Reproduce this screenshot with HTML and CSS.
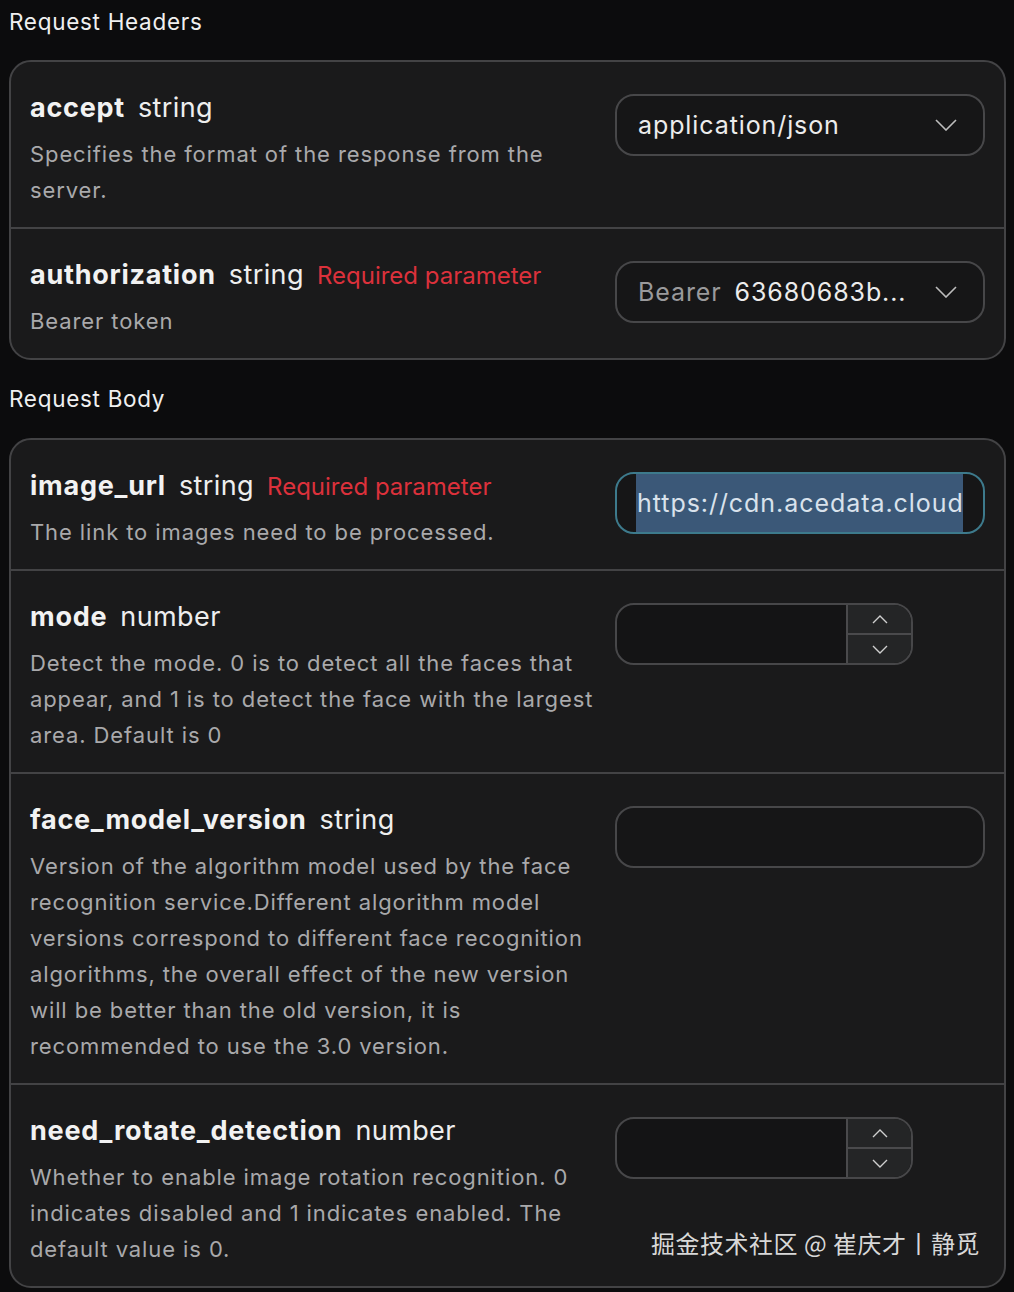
FILE: index.html
```html
<!DOCTYPE html>
<html>
<head>
<meta charset="utf-8">
<link rel="stylesheet" href="styles.css">
</head>
<body>
<div class="page">
  <h2 class="section-title">Request Headers</h2>
  <div class="card">
    <div class="row">
      <div class="info">
        <div class="title"><span class="name">accept</span><span class="type">string</span></div>
        <p class="desc">Specifies the format of the response from the server.</p>
      </div>
      <div class="control">
        <div class="field select">
          <span class="value">application/json</span>
          <svg class="chev" width="22" height="12" viewBox="0 0 22 12"><path d="M1 1 L11 11 L21 1" fill="none" stroke="#bdbdbd" stroke-width="1.6"/></svg>
        </div>
      </div>
    </div>
    <div class="row">
      <div class="info">
        <div class="title"><span class="name">authorization</span><span class="type">string</span><span class="req">Required parameter</span></div>
        <p class="desc">Bearer token</p>
      </div>
      <div class="control">
        <div class="field select">
          <span class="value"><span class="prefix">Bearer</span>63680683b...</span>
          <svg class="chev" width="22" height="12" viewBox="0 0 22 12"><path d="M1 1 L11 11 L21 1" fill="none" stroke="#bdbdbd" stroke-width="1.6"/></svg>
        </div>
      </div>
    </div>
  </div>

  <h2 class="section-title body-title">Request Body</h2>
  <div class="card body-card">
    <div class="row">
      <div class="info">
        <div class="title"><span class="name">image_url</span><span class="type">string</span><span class="req">Required parameter</span></div>
        <p class="desc">The link to images need to be processed.</p>
      </div>
      <div class="control">
        <div class="field focused"><span class="sel">https://cdn.acedata.cloud</span></div>
      </div>
    </div>
    <div class="row">
      <div class="info">
        <div class="title"><span class="name">mode</span><span class="type">number</span></div>
        <p class="desc">Detect the mode. 0 is to detect all the faces that appear, and 1 is to detect the face with the largest area. Default is 0</p>
      </div>
      <div class="control">
        <div class="number">
          <div class="num-input"></div>
          <div class="spin">
            <div class="spin-btn"><svg width="16" height="9" viewBox="0 0 16 9"><path d="M1 8 L8 1 L15 8" fill="none" stroke="#cfcfcf" stroke-width="1.4"/></svg></div>
            <div class="spin-btn"><svg width="16" height="9" viewBox="0 0 16 9"><path d="M1 1 L8 8 L15 1" fill="none" stroke="#cfcfcf" stroke-width="1.4"/></svg></div>
          </div>
        </div>
      </div>
    </div>
    <div class="row">
      <div class="info">
        <div class="title"><span class="name">face_model_version</span><span class="type">string</span></div>
        <p class="desc">Version of the algorithm model used by the face recognition service.Different algorithm model versions correspond to different face recognition algorithms, the overall effect of the new version will be better than the old version, it is recommended to use the 3.0 version.</p>
      </div>
      <div class="control">
        <div class="field"></div>
      </div>
    </div>
    <div class="row">
      <div class="info">
        <div class="title"><span class="name">need_rotate_detection</span><span class="type">number</span></div>
        <p class="desc">Whether to enable image rotation recognition. 0 indicates disabled and 1 indicates enabled. The default value is 0.</p>
      </div>
      <div class="control">
        <div class="number">
          <div class="num-input"></div>
          <div class="spin">
            <div class="spin-btn"><svg width="16" height="9" viewBox="0 0 16 9"><path d="M1 8 L8 1 L15 8" fill="none" stroke="#cfcfcf" stroke-width="1.4"/></svg></div>
            <div class="spin-btn"><svg width="16" height="9" viewBox="0 0 16 9"><path d="M1 1 L8 8 L15 1" fill="none" stroke="#cfcfcf" stroke-width="1.4"/></svg></div>
          </div>
        </div>
      </div>
    </div>
    <div class="watermark">掘金技术社区 @ 崔庆才丨静觅</div>
  </div>
</div>
</body>
</html>
```

FILE: styles.css
```css
html, body {
  margin: 0;
  padding: 0;
  background: #0c0c0d;
}
body {
  font-family: Inter, "Noto Sans", "Noto Sans CJK SC", sans-serif;
  color: #ececec;
}
.page {
  padding: 0 8px 0 9px;
}
.section-title {
  margin: 0;
  font-size: 22.5px;
  font-weight: 400;
  line-height: 44px;
  letter-spacing: 0.7px;
  color: #f0f0f0;
  height: 44px;
  margin-bottom: 16px;
}
.body-title {
  margin-top: 17px;
  margin-bottom: 17px;
}
.card {
  background: #1a1a1b;
  border: 2px solid #434345;
  border-radius: 22px;
  overflow: hidden;
  position: relative;
}
.row {
  display: flex;
  padding: 28px 19px 19px 19px;
  border-top: 2px solid #434345;
  gap: 15px;
}
.row:first-child {
  border-top: none;
}
.info {
  flex: 1;
  min-width: 0;
}
.title {
  display: flex;
  align-items: baseline;
  height: 36px;
  line-height: 36px;
  margin-bottom: 10px;
  white-space: nowrap;
}
.name {
  font-size: 27px;
  font-weight: 700;
  color: #f2f2f2;
  letter-spacing: 0.75px;
  margin-right: 13px;
}
.type {
  font-size: 27px;
  font-weight: 400;
  color: #eeeeee;
  letter-spacing: 0.4px;
  margin-right: 13px;
}
.req {
  font-size: 24px;
  color: #dc313b;
}
.desc {
  margin: 0;
  font-size: 22px;
  line-height: 36px;
  color: #a9a9ab;
  letter-spacing: 0.9px;
}
.control {
  width: 370px;
  flex: none;
  padding-top: 4px;
}
.field {
  box-sizing: border-box;
  height: 62px;
  border: 2px solid #474749;
  border-radius: 19px;
  background: #161617;
  display: flex;
  align-items: center;
  padding: 0 20px 0 21px;
  font-size: 25px;
  letter-spacing: 0.9px;
  color: #ececec;
}
.select {
  justify-content: space-between;
}
.chev {
  margin-right: 6px;
}
.prefix {
  color: #9a9a9c;
  margin-right: 13px;
}
.focused {
  border-color: #3d7a8c;
  padding: 0 20px 0 19px;
}
.sel {
  background: #3b5878;
  color: #d9e2ec;
  height: 58px;
  line-height: 58px;
  flex: 1;
  white-space: nowrap;
  overflow: hidden;
  padding-left: 1px;
  letter-spacing: 0.95px;
}
.number {
  display: flex;
  width: 298px;
  height: 62px;
  box-sizing: border-box;
  border: 2px solid #474749;
  border-radius: 19px;
  overflow: hidden;
  background: #141415;
}
.num-input {
  flex: 1;
}
.spin {
  width: 63px;
  border-left: 2px solid #4a4a4c;
  display: flex;
  flex-direction: column;
  background: #242526;
}
.spin-btn {
  flex: 1;
  display: flex;
  align-items: center;
  justify-content: center;
}
.spin-btn + .spin-btn {
  border-top: 2px solid #4a4a4c;
}
.watermark {
  position: absolute;
  right: 24px;
  bottom: 26px;
  font-size: 24px;
  color: #d8d8d8;
  font-family: "Noto Sans CJK SC", sans-serif;
  letter-spacing: 0.5px;
}
```
